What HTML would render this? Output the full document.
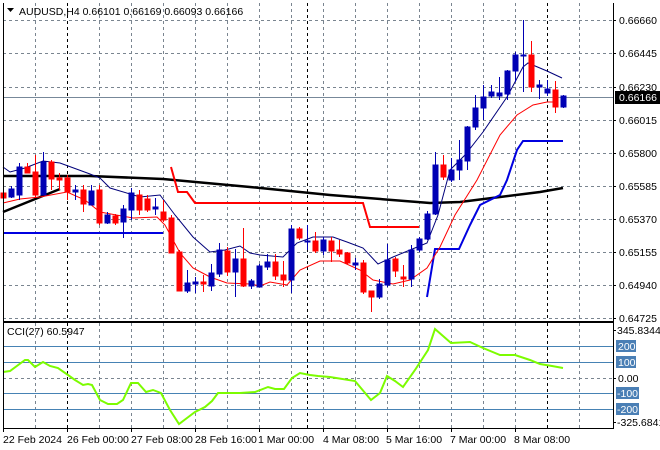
<!DOCTYPE html>
<html><head><meta charset="utf-8"><style>
html,body{margin:0;padding:0;background:#fff;width:660px;height:450px;overflow:hidden}
svg{display:block;font-family:"Liberation Sans",sans-serif}
</style></head><body>
<svg width="660" height="450" viewBox="0 0 660 450" xmlns="http://www.w3.org/2000/svg">
<rect width="660" height="450" fill="#fff"/>
<g stroke="#7a8590" stroke-width="1" stroke-dasharray="3,3" fill="none">
<path d="M35.5 3V321M99.5 3V321M131.5 3V321M163.5 3V321M195.5 3V321M227.5 3V321M259.5 3V321M291.5 3V321M323.5 3V321M355.5 3V321M387.5 3V321M419.5 3V321M451.5 3V321M483.5 3V321M515.5 3V321M579.5 3V321"/>
<path d="M35.5 323V428M99.5 323V428M131.5 323V428M163.5 323V428M195.5 323V428M227.5 323V428M259.5 323V428M291.5 323V428M323.5 323V428M355.5 323V428M387.5 323V428M419.5 323V428M451.5 323V428M483.5 323V428M515.5 323V428M579.5 323V428"/>
<path d="M3 20.5H613M3 53.5H613M3 87.5H613M3 120.5H613M3 153.5H613M3 186.5H613M3 219.5H613M3 252.5H613M3 285.5H613M3 318.5H613M3 378.5H613"/>
</g>
<g stroke="#000" stroke-width="1" stroke-dasharray="3,3">
<path d="M67.5 3V321M307.5 3V321M547.5 3V321M67.5 323V428M307.5 323V428M547.5 323V428"/>
</g>
<path d="M3 97.5H613" stroke="#778899" stroke-width="1"/>
<g stroke="#4682b4" stroke-width="1"><path d="M3 346.5H613M3 362.5H613M3 393.5H613M3 409.5H613"/></g>
<!-- indicator lines -->
<path d="M3 176L90 176L163 179L250 187L330 195L430 203L460 202L500 197L540 192L563 188" stroke="#000" stroke-width="2.5" fill="none"/>
<path d="M3 212L60 189" stroke="#000" stroke-width="2.5"/>
<path d="M171 167L178 192L187 192L195 203L363 203L370 227L419 227" stroke="#f00" stroke-width="2" fill="none"/>
<path d="M3 233H163" stroke="#0000e0" stroke-width="2"/>
<path d="M427 297L435 249L459 249L470 225L480 205L500 195L507 180L517 150L523 141L563 141" stroke="#0000e0" stroke-width="2" fill="none"/>
<path d="M3 167L10 172L25 168L43 161L60 163L90 174L100 178L110 188L140 197L160 195L175 215L193 237L210 252L225 250L240 246L250 253L260 255L283 257L297 243L313 237L333 237L347 242L363 248L378 264L393 257L410 250L427 243L438 215L450 170L465 155L483 132L507 97L523 67L528 63L547 71L562 78" stroke="#00007a" stroke-width="1" fill="none"/>
<path d="M3 203L20 199L40 197L67 192L85 200L100 212L133 218L157 217L165 225L180 253L193 268L210 277L227 283L250 284L260 286L270 282L287 285L300 270L320 261L340 261L360 270L373 280L393 284L410 280L427 268L440 247L455 215L477 180L500 135L517 115L533 105L547 102L557 102" stroke="#f00" stroke-width="1" fill="none"/>
<!-- candles -->
<g id="c"></g>
<g stroke-width="1">
<g stroke="#f00" fill="#f00">
<path d="M3.5 183V205M27.5 163V173M35.5 155V197M51.5 160V190M59.5 173V190M67.5 175V200M83.5 185V212M99.5 185V225M115.5 214V225M139.5 190V215M147.5 195V212M163.5 200V222M171.5 215V253M179.5 250V291M203.5 275V292M227.5 247V276M243.5 228V287M275.5 254V280M283.5 261V287M299.5 227V240M315.5 232V253M331.5 237V262M339.5 240V257M347.5 252V264M363.5 260V294M371.5 291V312M395.5 257V277M403.5 265V287M443.5 155V180M531.5 41V92M555.5 81V113"/>
<rect x="1" y="193" width="5" height="5"/><rect x="25" y="167" width="5" height="6"/><rect x="33" y="172" width="5" height="23"/><rect x="49" y="162" width="5" height="17"/><rect x="57" y="178" width="5" height="2"/><rect x="65" y="178" width="5" height="14"/><rect x="81" y="190" width="5" height="14"/><rect x="97" y="190" width="5" height="33"/><rect x="113" y="216" width="5" height="7"/><rect x="137" y="195" width="5" height="15"/><rect x="145" y="199" width="5" height="11"/><rect x="161" y="212" width="5" height="8"/><rect x="169" y="218" width="5" height="35"/><rect x="177" y="252" width="5" height="39"/><rect x="201" y="282" width="5" height="2"/><rect x="225" y="251" width="5" height="21"/><rect x="241" y="259" width="5" height="27"/><rect x="273" y="262" width="5" height="14"/><rect x="281" y="275" width="5" height="5"/><rect x="297" y="229" width="5" height="9"/><rect x="313" y="241" width="5" height="10"/><rect x="329" y="241" width="5" height="10"/><rect x="337" y="250" width="5" height="4"/><rect x="345" y="253" width="5" height="10"/><rect x="361" y="263" width="5" height="29"/><rect x="369" y="291" width="5" height="6"/><rect x="393" y="259" width="5" height="12"/><rect x="401" y="277" width="5" height="2"/><rect x="441" y="165" width="5" height="12"/><rect x="529" y="55" width="5" height="32"/><rect x="553" y="90" width="5" height="17"/>
</g>
<g stroke="#0000b4" fill="#0000b4">
<path d="M11.5 186V198M19.5 163V200M43.5 152V195M75.5 185V200M91.5 185V205M107.5 212V224M123.5 205V238M131.5 188V220M155.5 198V215M187.5 270V293M195.5 277V293M211.5 264V291M219.5 243V277M235.5 249V297M251.5 279V289M259.5 264V287M267.5 254V270M291.5 225V293M307.5 225V250M323.5 237V255M355.5 258V270M379.5 279V299M387.5 244V287M411.5 245V287M419.5 237V252M427.5 211V240M435.5 152V215M451.5 158V182M459.5 140V180M467.5 126V170M475.5 95V130M483.5 85V120M491.5 85V98M499.5 77V100M507.5 70V100M515.5 52V82M523.5 20V92M539.5 80V99M547.5 80V96M563.5 95V108"/>
<rect x="9" y="189" width="5" height="8"/><rect x="17" y="167" width="5" height="28"/><rect x="41" y="162" width="5" height="33"/><rect x="73" y="190" width="5" height="2"/><rect x="89" y="191" width="5" height="14"/><rect x="105" y="215" width="5" height="8"/><rect x="121" y="209" width="5" height="13"/><rect x="129" y="193" width="5" height="17"/><rect x="153" y="207" width="5" height="2"/><rect x="185" y="283" width="5" height="8"/><rect x="193" y="282" width="5" height="2"/><rect x="209" y="273" width="5" height="13"/><rect x="217" y="250" width="5" height="24"/><rect x="233" y="259" width="5" height="13"/><rect x="249" y="281" width="5" height="5"/><rect x="257" y="266" width="5" height="21"/><rect x="265" y="262" width="5" height="5"/><rect x="289" y="229" width="5" height="51"/><rect x="305" y="241" width="5" height="1"/><rect x="321" y="240" width="5" height="11"/><rect x="353" y="263" width="5" height="2"/><rect x="377" y="284" width="5" height="13"/><rect x="385" y="260" width="5" height="25"/><rect x="409" y="250" width="5" height="29"/><rect x="417" y="239" width="5" height="11"/><rect x="425" y="214" width="5" height="25"/><rect x="433" y="165" width="5" height="49"/><rect x="449" y="170" width="5" height="10"/><rect x="457" y="160" width="5" height="10"/><rect x="465" y="127" width="5" height="34"/><rect x="473" y="108" width="5" height="19"/><rect x="481" y="97" width="5" height="11"/><rect x="489" y="92" width="5" height="4"/><rect x="497" y="93" width="5" height="3"/><rect x="505" y="71" width="5" height="23"/><rect x="513" y="55" width="5" height="16"/><rect x="521" y="55" width="5" height="1"/><rect x="537" y="85" width="5" height="2"/><rect x="545" y="89" width="5" height="4"/><rect x="561" y="96" width="5" height="11"/>
</g>
</g>
<!-- CCI -->
<path d="M3 372L10 371L25 360L28 360L35 367L43 362L50 366L58 368L68 375L75 380L83 385L88 384L92 385L100 400L108 404L117 404L123 400L131 383L138 383L146 392L153 390L161 393L170 410L179 424L187 418L195 412L205 407L212 401L218 393L240 393L255 392L268 387L275 389L284 389L292 378L300 373L310 375L318 376L330 377L355 381L371 400L380 393L387 376L395 381L403 387L415 370L428 350L435 329L451 343L470 342L483 348L500 355L515 355L530 360L540 364L552 366L563 368" stroke="#7cfc00" stroke-width="2" fill="none"/>
<!-- frames -->
<path d="M3.5 3V428.5H613.5V3" stroke="#000" fill="none"/>
<path d="M3 321.5H613M3 322.5H613" stroke="#000"/>
<g stroke="#000"><path d="M613 20.5h3M613 53.5h3M613 87.5h3M613 120.5h3M613 153.5h3M613 186.5h3M613 219.5h3M613 252.5h3M613 285.5h3M613 318.5h3M613 330.5h3M613 378.5h3M613 422.5h3"/>
<path d="M3.5 428v4M67.5 428v4M131.5 428v4M195.5 428v4M259.5 428v4M323.5 428v4M387.5 428v4M451.5 428v4M515.5 428v4"/></g>
<g font-size="10.5" fill="#000">
<text x="619" y="24">0.66660</text><text x="619" y="57">0.66445</text><text x="619" y="124">0.66015</text><text x="619" y="157">0.65800</text><text x="619" y="190">0.65585</text><text x="619" y="223">0.65370</text><text x="619" y="256">0.65155</text><text x="619" y="289">0.64940</text><text x="619" y="322">0.64725</text>
<text x="619" y="91">0.66230</text>
<rect x="615" y="91" width="45" height="13" fill="#000"/>
<text x="619" y="101" fill="#fff">0.66166</text>
<text x="617" y="334">345.8344</text>
<rect x="616" y="340" width="20" height="12" fill="#4a7fb5"/><text x="618" y="350" fill="#fff">200</text>
<rect x="616" y="356" width="20" height="12" fill="#4a7fb5"/><text x="618" y="366" fill="#fff">100</text>
<text x="618" y="382">0.00</text>
<rect x="616" y="387" width="23" height="12" fill="#4a7fb5"/><text x="617" y="397" fill="#fff">-100</text>
<rect x="616" y="403" width="23" height="12" fill="#4a7fb5"/><text x="617" y="413" fill="#fff">-200</text>
<text x="617" y="426">-325.6841</text>
<text x="3" y="443">22 Feb 2024</text><text x="67" y="443">26 Feb 00:00</text><text x="131" y="443">27 Feb 08:00</text><text x="195" y="443">28 Feb 16:00</text><text x="258" y="443">1 Mar 00:00</text><text x="323" y="443">4 Mar 08:00</text><text x="386" y="443">5 Mar 16:00</text><text x="450" y="443">7 Mar 00:00</text><text x="514" y="443">8 Mar 08:00</text>
<text x="7" y="335">CCI(27) 60.5947</text>
<text x="19" y="15">AUDUSD,H4  0.66101 0.66169 0.66093 0.66166</text>
</g>
<path d="M7 8h7l-3.5 4z" fill="#000"/>
</svg>
</body></html>
